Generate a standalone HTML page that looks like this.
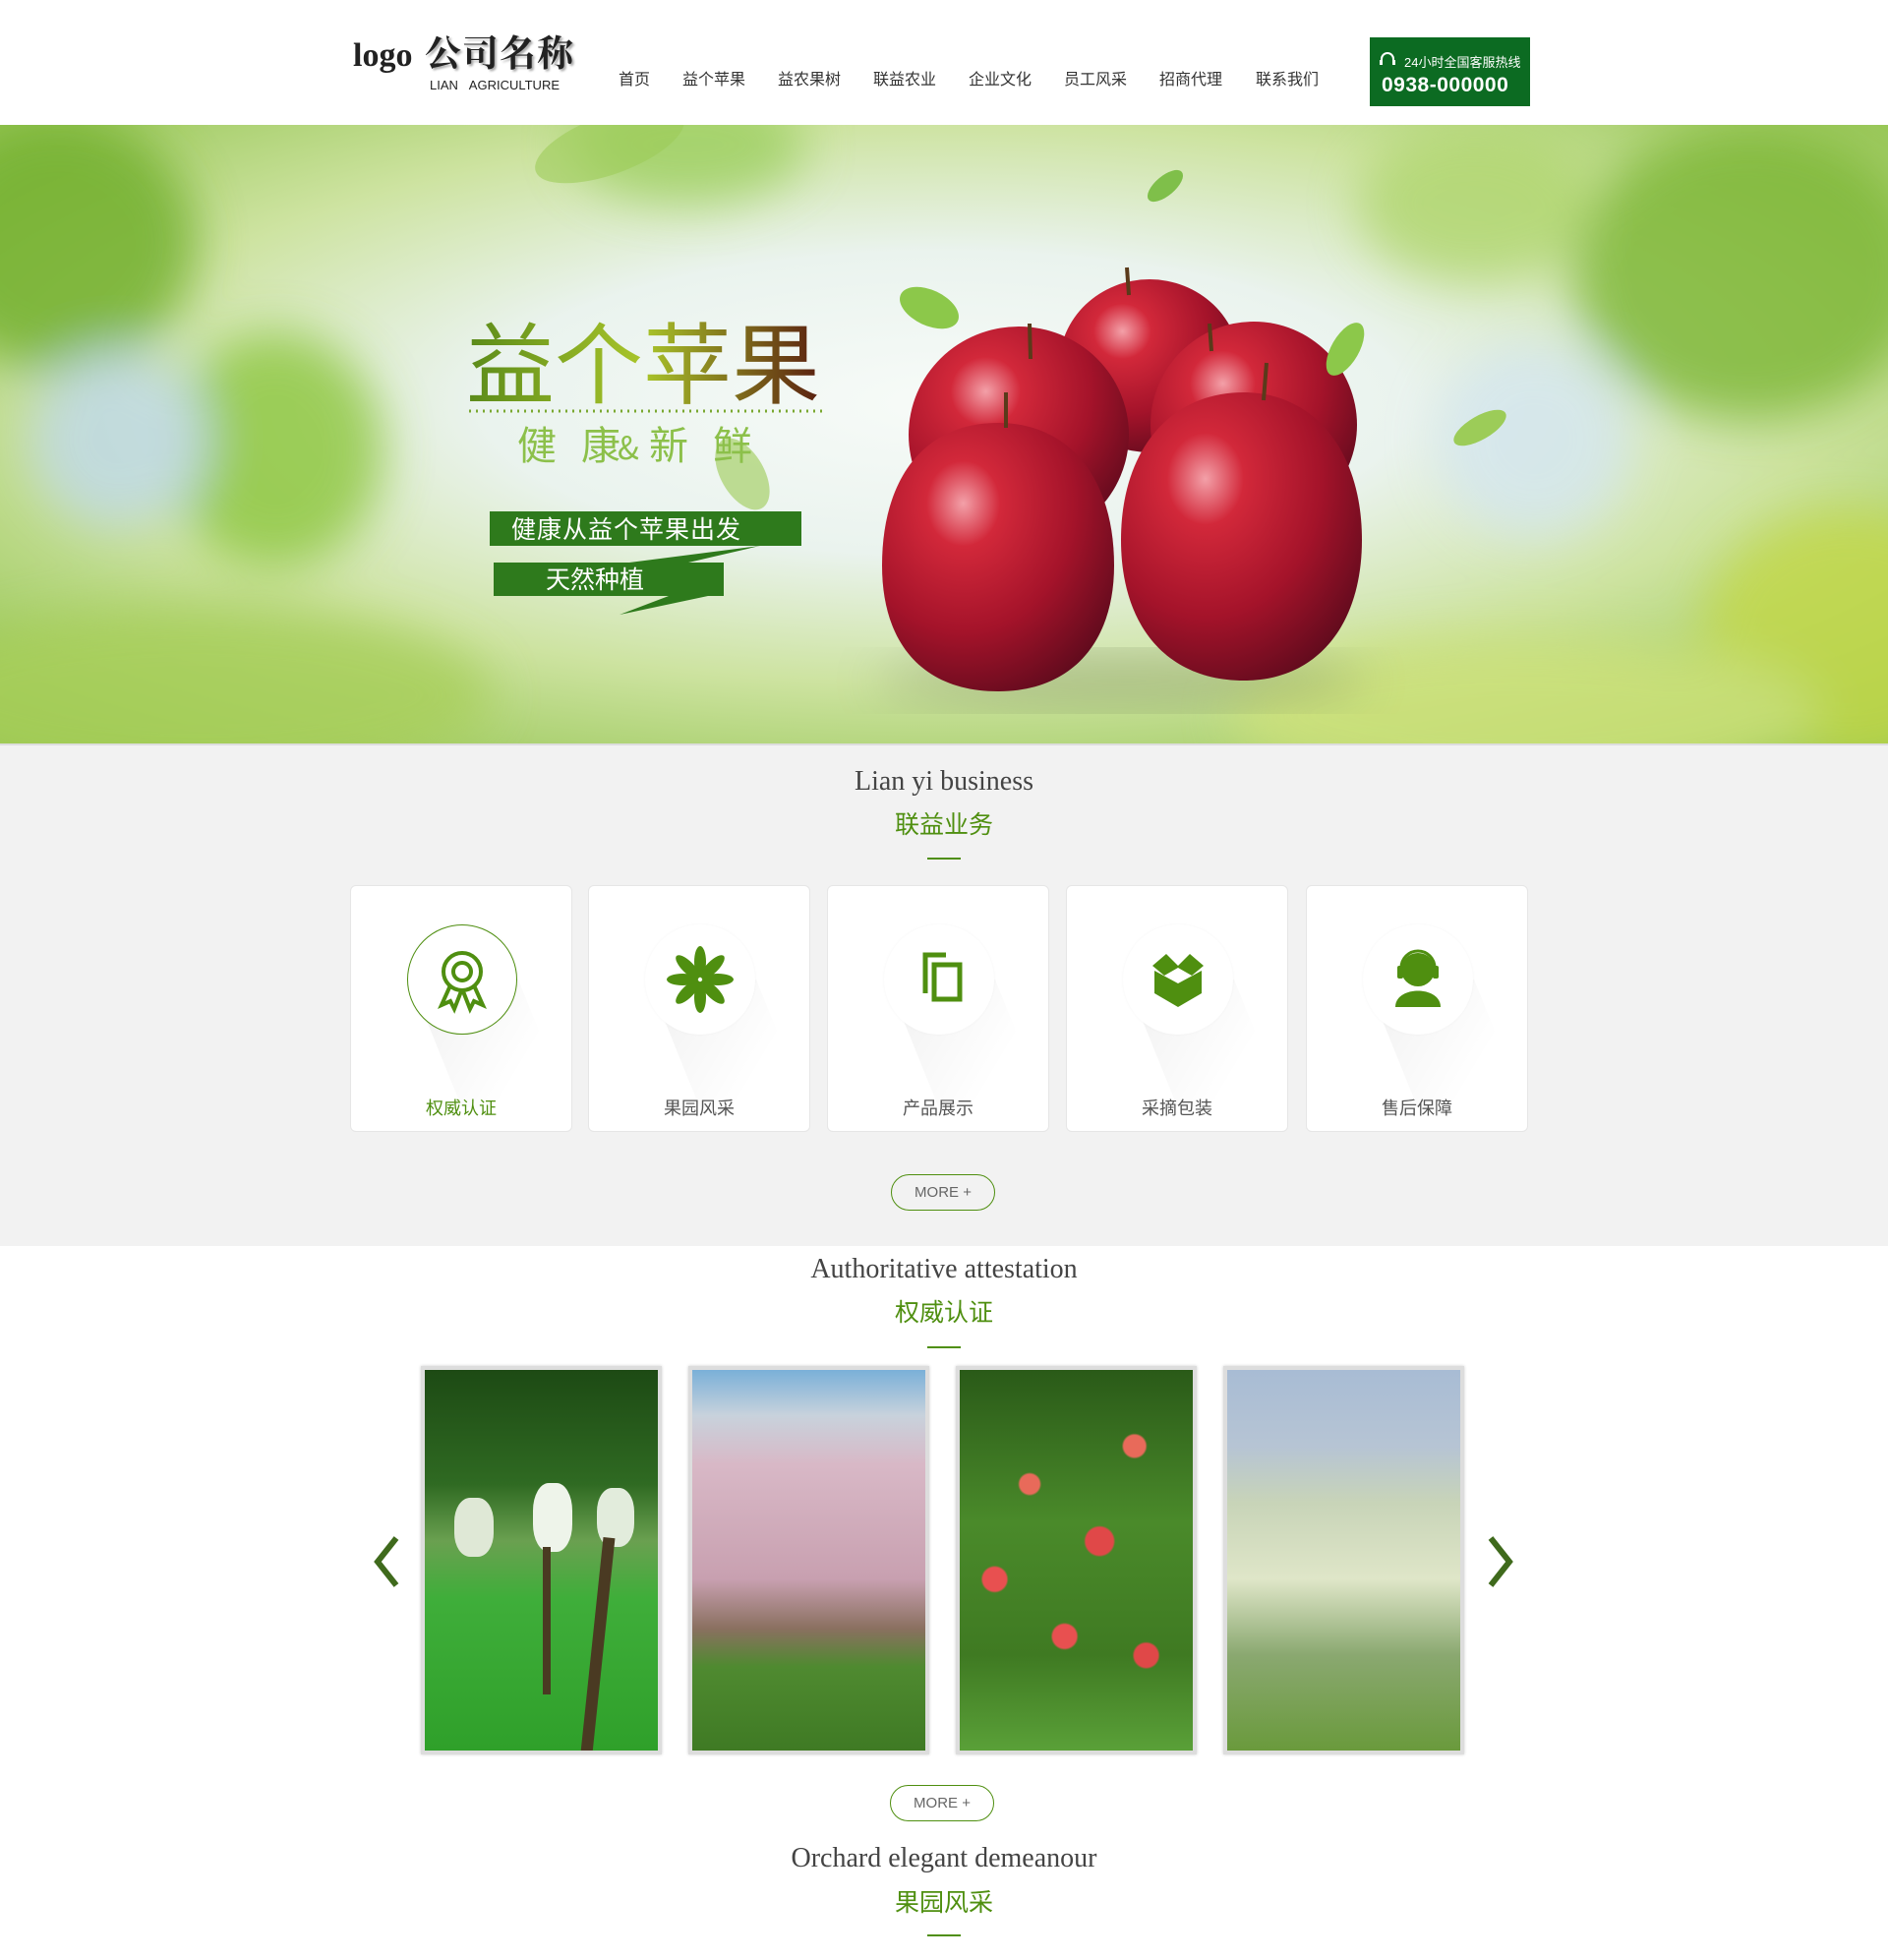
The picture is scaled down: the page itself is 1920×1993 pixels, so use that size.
<!DOCTYPE html>
<html><head><meta charset="utf-8"><style>
*{margin:0;padding:0;box-sizing:border-box}
body{width:1920px;height:1993px;background:#fff;font-family:"Liberation Sans","Noto Sans CJK SC",sans-serif;position:relative;overflow:hidden;color:#333}
.abs{position:absolute}
.nav a{position:absolute;top:67px;font-size:16px;color:#333;text-decoration:none;white-space:nowrap}
.ttl{position:absolute;left:0;width:1920px;text-align:center;font-family:"Liberation Serif",serif;font-size:28px;color:#444}
.sub{position:absolute;left:0;width:1920px;text-align:center;font-size:25px;color:#4f8f10}
.ln{position:absolute;left:943px;width:34px;height:2px;background:#4f8f10}
.card{position:absolute;top:900px;width:226px;height:251px;background:#fff;border:1px solid #e6e6e6;border-radius:6px;overflow:hidden}
.card .c{position:absolute;left:57px;top:39px;width:112px;height:112px;border-radius:50%;background:#fff;box-shadow:0 0 3px rgba(0,0,0,.04)}
.card .sh{position:absolute;left:60px;top:95px;width:110px;height:130px;background:linear-gradient(135deg,rgba(0,0,0,.06),rgba(0,0,0,0) 70%);transform:skewX(22deg);transform-origin:top}
.card .t{position:absolute;top:212px;width:100%;text-align:center;font-size:18px;color:#555}
.card svg{position:absolute;left:57px;top:39px}
.more{position:absolute;width:106px;height:37px;border:1px solid #4f8f10;border-radius:19px;text-align:center;line-height:35px;font-size:15px;color:#666}
.ph{position:absolute;top:1389px;width:245px;height:395px;border:4px solid #ddd;box-shadow:0 0 3px rgba(0,0,0,.2);overflow:hidden}
</style></head><body>
<div class="abs" style="left:359px;top:38px;font-family:'Liberation Serif',serif;font-size:34px;font-weight:bold;color:#222">logo</div>
<div class="abs" style="left:432px;top:24px;font-family:'Noto Serif CJK SC',serif;font-size:37px;font-weight:bold;color:#222;letter-spacing:1px;text-shadow:2px 2px 2px #aaa">公司名称</div>
<div class="abs" style="left:437px;top:79px;font-size:13px;color:#222;word-spacing:8px">LIAN AGRICULTURE</div>
<div class="nav">
<a style="left:629px">首页</a><a style="left:694px">益个苹果</a><a style="left:791px">益农果树</a><a style="left:888px">联益农业</a><a style="left:985px">企业文化</a><a style="left:1082px">员工风采</a><a style="left:1179px">招商代理</a><a style="left:1277px">联系我们</a>
</div>
<div class="abs" style="left:1393px;top:38px;width:163px;height:70px;background:#0c6b22;color:#fff">
<svg class="abs" style="left:8px;top:13px" width="20" height="20" viewBox="0 0 20 20"><path d="M4 14 V9 a6 6 0 0 1 12 0 V14" fill="none" stroke="#fff" stroke-width="2"/><rect x="2" y="10" width="3" height="5" fill="#fff"/><rect x="15" y="10" width="3" height="5" fill="#fff"/></svg>
<div class="abs" style="left:35px;top:15px;font-size:13px;white-space:nowrap">24小时全国客服热线</div>
<div class="abs" style="left:12px;top:37px;font-size:21px;font-weight:bold;letter-spacing:0.5px">0938-000000</div>
</div>
<svg class="abs" style="left:0;top:127px" width="1920" height="629" viewBox="0 0 1920 629">
<defs>
<radialGradient id="bg" cx="0.5" cy="0.45" r="0.7"><stop offset="0" stop-color="#f7fbf8"/><stop offset="0.35" stop-color="#eaf3ee"/><stop offset="0.65" stop-color="#cde3a0"/><stop offset="1" stop-color="#93c450"/></radialGradient>
<radialGradient id="ap" cx="0.35" cy="0.3" r="0.8"><stop offset="0" stop-color="#f3a0a8"/><stop offset="0.2" stop-color="#d2283a"/><stop offset="0.6" stop-color="#a4132a"/><stop offset="1" stop-color="#5b0a1c"/></radialGradient>
<linearGradient id="tg" x1="0" x2="1"><stop offset="0" stop-color="#5a8a1a"/><stop offset="0.5" stop-color="#a9c52a"/><stop offset="1" stop-color="#5a2010"/></linearGradient>
<filter id="bl"><feGaussianBlur stdDeviation="25"/></filter>
</defs>
<rect width="1920" height="629" fill="url(#bg)"/>
<g filter="url(#bl)" opacity="0.8">
<ellipse cx="60" cy="120" rx="140" ry="130" fill="#6fae2a"/>
<ellipse cx="280" cy="330" rx="110" ry="120" fill="#8cc63c"/>
<ellipse cx="1780" cy="150" rx="180" ry="150" fill="#7cb634"/>
<ellipse cx="1880" cy="520" rx="150" ry="130" fill="#c3d84a"/>
<ellipse cx="200" cy="580" rx="300" ry="90" fill="#a8cf5a"/>
<ellipse cx="1550" cy="600" rx="300" ry="80" fill="#cfe27a"/>
<ellipse cx="700" cy="20" rx="120" ry="60" fill="#9ccf60"/>
<ellipse cx="1500" cy="80" rx="120" ry="80" fill="#b0d670"/>
<ellipse cx="120" cy="320" rx="90" ry="90" fill="#bfd9ea"/>
<ellipse cx="1560" cy="320" rx="100" ry="100" fill="#d4e6f0"/>
</g>
<ellipse cx="1140" cy="565" rx="250" ry="28" fill="#7a8a60" opacity="0.4" filter="url(#bl)"/>
<ellipse cx="1169" cy="245" rx="92" ry="88" fill="url(#ap)"/>
<ellipse cx="1036" cy="315" rx="112" ry="110" fill="url(#ap)"/>
<ellipse cx="1275" cy="305" rx="105" ry="105" fill="url(#ap)"/>
<path d="M1015 303 c-78 0 -118 60 -118 145 c0 80 42 128 118 128 c75 0 118 -50 118 -128 c0 -88 -45 -145 -118 -145z" fill="url(#ap)"/>
<path d="M1265 272 c-78 0 -125 62 -125 150 c0 88 47 143 125 143 c75 0 120 -57 120 -143 c0 -92 -50 -150 -120 -150z" fill="url(#ap)"/>
<path d="M1023 308 l0 -36 M1048 238 l-1 -36 M1285 280 l3 -38 M1232 230 l-2 -28 M1148 173 l-2 -28" stroke="#5a3a1a" stroke-width="4"/>
<ellipse cx="945" cy="186" rx="32" ry="18" fill="#8cc84a" transform="rotate(25 945 186)"/>
<ellipse cx="1368" cy="228" rx="14" ry="30" fill="#8cc84a" transform="rotate(30 1368 228)"/>
<ellipse cx="1185" cy="62" rx="10" ry="22" fill="#7fbf4a" transform="rotate(50 1185 62)"/>
<ellipse cx="1505" cy="308" rx="12" ry="30" fill="#9ccc58" transform="rotate(60 1505 308)"/>
<ellipse cx="755" cy="355" rx="22" ry="40" fill="#a6d06a" opacity="0.7" transform="rotate(-30 755 355)"/>
<ellipse cx="620" cy="20" rx="80" ry="30" fill="#9ccc58" opacity="0.6" transform="rotate(-20 620 20)"/>
<text x="474" y="276" font-family="Noto Sans CJK SC,sans-serif" font-size="90" fill="url(#tg)">益个苹果</text>
<line x1="477" y1="291" x2="838" y2="291" stroke="#7aa830" stroke-width="3" stroke-dasharray="2 5"/>
<text x="526" y="340" font-family="Noto Sans CJK SC,sans-serif" font-size="40" fill="#8cc04a" letter-spacing="8">健 康</text>
<text x="628" y="340" font-family="Noto Sans CJK SC,sans-serif" font-size="32" fill="#8cc04a">&amp;</text>
<text x="660" y="340" font-family="Noto Sans CJK SC,sans-serif" font-size="40" fill="#8cc04a" letter-spacing="8">新 鲜</text>
<rect x="498" y="393" width="317" height="35" fill="#2e7a1c"/>
<polygon points="640,445 773,428 700,445" fill="#2e7a1c"/>
<rect x="502" y="445" width="234" height="34" fill="#2e7a1c"/>
<polygon points="630,498 720,479 680,479" fill="#2e7a1c"/>
<text x="520" y="420" font-family="Noto Sans CJK SC,sans-serif" font-size="25" fill="#fff" letter-spacing="1">健康从益个苹果出发</text>
<text x="555" y="471" font-family="Noto Sans CJK SC,sans-serif" font-size="25" fill="#fff">天然种植</text>
</svg>
<div class="abs" style="left:0;top:756px;width:1920px;height:511px;background:#f2f2f2;border-top:2px solid #ddd"></div>
<div class="ttl" style="top:779px">Lian yi business</div>
<div class="sub" style="top:819px">联益业务</div>
<div class="ln" style="top:872px"></div>

<div class="card" style="left:356px"><div class="sh"></div><div class="c" style="border:1.5px solid #4f8f10"></div>
<svg width="112" height="112" viewBox="0 0 112 112"><g fill="none" stroke="#4f8f10" stroke-width="4"><circle cx="56" cy="48" r="19"/><circle cx="56" cy="48" r="9"/><path d="M44 62 L35 82 L44 78 L48 86 L55 68 M68 62 L77 82 L68 78 L64 86 L57 68"/></g></svg>
<div class="t" style="color:#4f8f10">权威认证</div></div>

<div class="card" style="left:598px"><div class="sh"></div><div class="c"></div>
<svg width="112" height="112" viewBox="0 0 112 112"><g fill="#4f8f10"><ellipse cx="56" cy="38" rx="6" ry="16"/><ellipse cx="56" cy="38" rx="6" ry="16" transform="rotate(45 56 56)"/><ellipse cx="56" cy="38" rx="6" ry="16" transform="rotate(90 56 56)"/><ellipse cx="56" cy="38" rx="6" ry="16" transform="rotate(135 56 56)"/><ellipse cx="56" cy="38" rx="6" ry="16" transform="rotate(180 56 56)"/><ellipse cx="56" cy="38" rx="6" ry="16" transform="rotate(225 56 56)"/><ellipse cx="56" cy="38" rx="6" ry="16" transform="rotate(270 56 56)"/><ellipse cx="56" cy="38" rx="6" ry="16" transform="rotate(315 56 56)"/></g></svg>
<div class="t">果园风采</div></div>

<div class="card" style="left:841px"><div class="sh"></div><div class="c"></div>
<svg width="112" height="112" viewBox="0 0 112 112"><g fill="none" stroke="#4f8f10" stroke-width="5"><path d="M42 70 V31 H63"/><rect x="51" y="41" width="26" height="35"/></g></svg>
<div class="t">产品展示</div></div>

<div class="card" style="left:1084px"><div class="sh"></div><div class="c"></div>
<svg width="112" height="112" viewBox="0 0 112 112"><g fill="#4f8f10"><path d="M30 42 L44 30 L56 42 L68 30 L82 42 L70 52 L56 44 L42 52Z"/><path d="M32 47 L56 60 L80 47 L80 70 L56 84 L32 70Z"/></g></svg>
<div class="t">采摘包装</div></div>

<div class="card" style="left:1328px"><div class="sh"></div><div class="c"></div>
<svg width="112" height="112" viewBox="0 0 112 112"><g fill="#4f8f10"><circle cx="56" cy="46" r="17"/><path d="M33 84 C33 62 79 62 79 84Z"/><path d="M39 50 V44 a17 17 0 0 1 34 0 V50" fill="none" stroke="#4f8f10" stroke-width="3"/><rect x="35" y="42" width="6" height="13" rx="2"/><rect x="71" y="42" width="6" height="13" rx="2"/></g></svg>
<div class="t">售后保障</div></div>

<div class="more" style="left:906px;top:1194px">MORE +</div>

<div class="ttl" style="top:1275px">Authoritative attestation</div>
<div class="sub" style="top:1315px">权威认证</div>
<div class="ln" style="top:1369px"></div>

<svg class="abs" style="left:378px;top:1560px" width="30" height="56" viewBox="0 0 30 56"><path d="M25 4 L6 28 L25 52" fill="none" stroke="#3f6a1c" stroke-width="6"/></svg>
<svg class="abs" style="left:1511px;top:1560px" width="30" height="56" viewBox="0 0 30 56"><path d="M5 4 L24 28 L5 52" fill="none" stroke="#3f6a1c" stroke-width="6"/></svg>

<div class="ph" style="left:428px;background:linear-gradient(180deg,#1d4a14 0%,#2f6a22 30%,#6aa050 45%,#3fae3a 60%,#2fa02a 100%)">
<div class="abs" style="left:30px;top:130px;width:40px;height:60px;border-radius:40%;background:#dfe8d6"></div><div class="abs" style="left:110px;top:115px;width:40px;height:70px;border-radius:40%;background:#eef4ea"></div><div class="abs" style="left:175px;top:120px;width:38px;height:60px;border-radius:40%;background:#e2ecdc"></div><div class="abs" style="left:170px;top:170px;width:12px;height:220px;background:#4a3a22;transform:rotate(6deg)"></div><div class="abs" style="left:120px;top:180px;width:8px;height:150px;background:#4a3a22"></div></div>
<div class="ph" style="left:700px;background:linear-gradient(180deg,#7ab0d8 0%,#c8d2dc 12%,#d8b8c6 25%,#c8a0b0 55%,#8a7060 68%,#4f8a30 78%,#3f7a24 100%)"></div>
<div class="ph" style="left:972px;background:radial-gradient(circle at 30% 30%,#e86a5a 0,#e86a5a 10px,transparent 12px),radial-gradient(circle at 60% 45%,#e04848 0,#e04848 14px,transparent 16px),radial-gradient(circle at 45% 70%,#e85050 0,#e85050 12px,transparent 14px),radial-gradient(circle at 15% 55%,#e85050 0,#e85050 12px,transparent 14px),radial-gradient(circle at 75% 20%,#e86a5a 0,#e86a5a 11px,transparent 13px),radial-gradient(circle at 80% 75%,#e04848 0,#e04848 12px,transparent 14px),linear-gradient(180deg,#2a5a18 0%,#4a8a2a 40%,#3f7a22 75%,#5aa038 100%)"></div>
<div class="ph" style="left:1244px;background:linear-gradient(180deg,#a8bcd4 0%,#b6c4d4 20%,#c8d4b8 35%,#dfe6c8 55%,#8aa870 75%,#6a9a3c 100%)"></div>

<div class="more" style="left:905px;top:1815px">MORE +</div>
<div class="ttl" style="top:1874px">Orchard elegant demeanour</div>
<div class="sub" style="top:1915px">果园风采</div>
<div class="ln" style="top:1967px"></div>
</body></html>
